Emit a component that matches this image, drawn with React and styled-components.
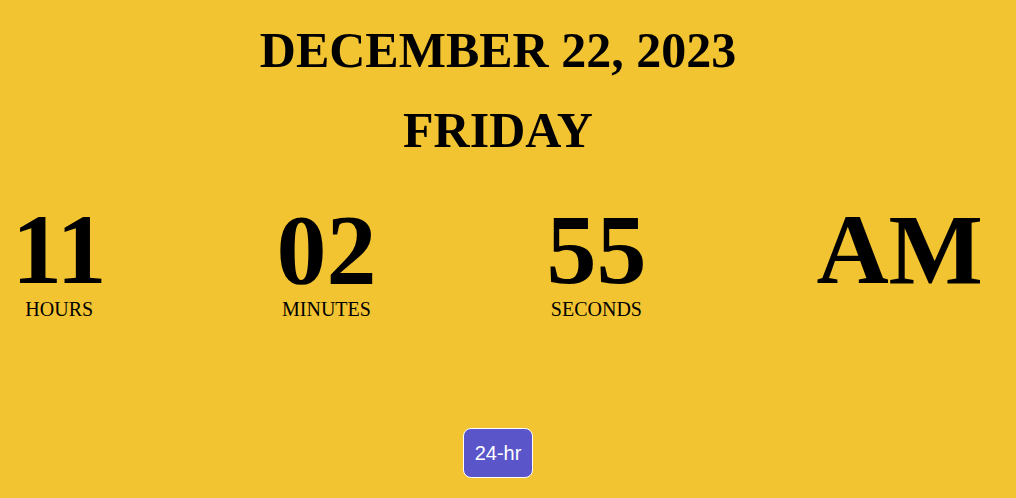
import React from 'react'
import styled, { createGlobalStyle } from 'styled-components'

const GlobalStyle = createGlobalStyle`
  html, body {
    margin: 0;
    padding: 0;
    background: #f3c432;
  }
  body {
    font-family: "Liberation Serif", "Times New Roman", serif;
    color: #000;
  }
`

const Page = styled.main`
  height: 498px;
  box-sizing: border-box;
  padding-right: 20px;
  display: flex;
  flex-direction: column;
  align-items: center;
  overflow: hidden;
`

const DateLine = styled.h1`
  font-size: 50px;
  font-weight: 700;
  margin: ${(p) => p.top}px 0 0;
  line-height: 1;
  text-transform: uppercase;
`

const ClockRow = styled.div`
  width: 100%;
  box-sizing: border-box;
  display: flex;
  justify-content: space-between;
  align-items: flex-start;
  padding: 0 13px 0 12px;
  margin-top: 50px;
`

const Unit = styled.div`
  display: flex;
  flex-direction: column;
  align-items: center;
`

const Digits = styled.span`
  font-size: 100px;
  font-weight: 700;
  line-height: 90px;
`

const Label = styled.span`
  font-size: 20px;
  line-height: 20px;
  text-transform: uppercase;
  margin-top: 4px;
`

const ToggleButton = styled.button`
  margin-top: auto;
  margin-bottom: 20px;
  width: 70px;
  height: 50px;
  background: #5a55c8;
  color: #fff;
  border: 1px solid #fff;
  border-radius: 8px;
  font-family: "Liberation Sans", Arial, sans-serif;
  font-size: 20px;
  cursor: pointer;
`

const units = [
  { value: '11', label: 'Hours' },
  { value: '02', label: 'Minutes' },
  { value: '55', label: 'Seconds' },
  { value: 'AM', label: '' },
]

export default function App() {
  return (
    <>
      <GlobalStyle />
      <Page>
        <DateLine top={25}>December 22, 2023</DateLine>
        <DateLine top={30}>Friday</DateLine>
        <ClockRow>
          {units.map((u) => (
            <Unit key={u.value}>
              <Digits>{u.value}</Digits>
              {u.label && <Label>{u.label}</Label>}
            </Unit>
          ))}
        </ClockRow>
        <ToggleButton>24-hr</ToggleButton>
      </Page>
    </>
  )
}
